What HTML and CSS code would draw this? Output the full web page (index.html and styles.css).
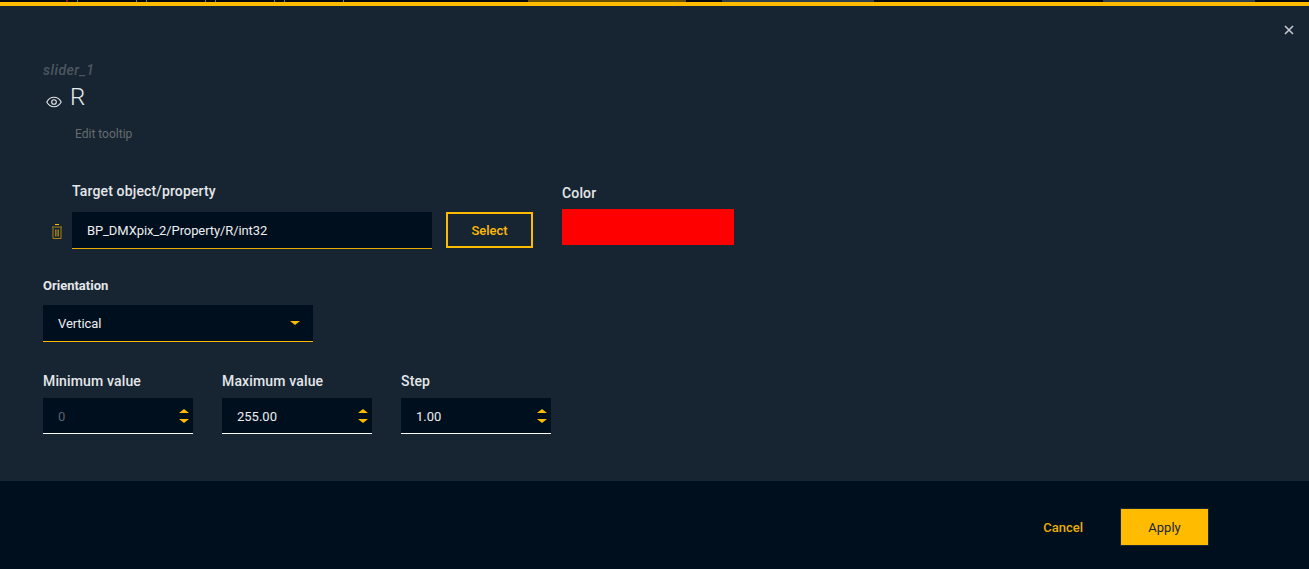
FILE: index.html
```html
<!DOCTYPE html>
<html lang="en">
<head>
    <meta charset="UTF-8">
    <title>Slider properties</title>
    <link rel="stylesheet" href="styles.css">
</head>
<body>
    <div class="strip">
        <span class="seg seg-black seg-a"><i class="tick tick-red"></i><i class="tick"></i><i class="tick"></i><i class="tick"></i><i class="tick"></i><i class="tick"></i><i class="tick"></i><i class="tick"></i><i class="tick"></i></span>
        <span class="seg seg-brown"></span>
        <span class="seg seg-black seg-b"></span>
        <span class="seg seg-grey seg-c"></span>
        <span class="seg seg-black seg-d"></span>
        <span class="seg seg-grey seg-e"></span>
        <span class="seg seg-black seg-f"></span>
    </div>
    <div class="modal">
        <button class="close" type="button" aria-label="Close">
            <svg width="10" height="10" viewBox="0 0 10 10"><path d="M1 1l8 8M9 1l-8 8" stroke="#c3c9cf" stroke-width="1.6" fill="none"/></svg>
        </button>

        <div class="header">
            <div class="widget-id">slider_1</div>
            <div class="title-row">
                <svg class="eye" width="16" height="12" viewBox="0 0 16 12" fill="none" stroke="#e6e8ea" stroke-width="1.1">
                    <path d="M.8 6C2.4 3 5 1.3 8 1.3S13.600 3 15.200 6C13.600 9 11 10.700 8 10.700S2.400 9 .8 6z"/>
                    <circle cx="8" cy="6" r="2.300"/>
                </svg>
                <h1>R</h1>
            </div>
            <div class="tooltip-hint">Edit tooltip</div>
        </div>

        <div class="target-row">
            <svg class="trash" width="12" height="15" viewBox="0 0 12 15" fill="none" stroke="#a98412" stroke-width="1">
                <path d="M4 .5h4" stroke="#ffbb00"/>
                <path d="M1 3h10"/>
                <path d="M2 3.500v11h8v-11"/>
                <path d="M4.800 5.500v7M7.200 5.500v7" stroke-width="1.400"/>
            </svg>
            <div class="target-col">
                <label class="label-target">Target object/property</label>
                <div class="field field-target">BP_DMXpix_2/Property/R/int32</div>
            </div>
            <button class="btn-select" type="button">Select</button>
            <div class="color-col">
                <label class="label-color">Color</label>
                <div class="swatch"></div>
            </div>
        </div>

        <div class="orientation">
            <label class="label-bold">Orientation</label>
            <div class="field field-select">
                <span>Vertical</span>
                <i class="caret"></i>
            </div>
        </div>

        <div class="number-row">
            <div class="number-col">
                <label>Minimum value</label>
                <div class="field field-number muted"><span class="value">0</span><span class="spin"><i class="up"></i><i class="down"></i></span></div>
            </div>
            <div class="number-col">
                <label>Maximum value</label>
                <div class="field field-number"><span class="value">255.00</span><span class="spin"><i class="up"></i><i class="down"></i></span></div>
            </div>
            <div class="number-col">
                <label>Step</label>
                <div class="field field-number"><span class="value">1.00</span><span class="spin"><i class="up"></i><i class="down"></i></span></div>
            </div>
        </div>
    </div>
    <div class="footer">
        <button class="btn-cancel" type="button">Cancel</button>
        <button class="btn-apply" type="button">Apply</button>
    </div>
</body>
</html>
```

FILE: styles.css
```css
html, body {
    margin: 0;
    padding: 0;
}
body {
    font-family: 'Roboto', 'Liberation Sans', sans-serif;
    font-size: 13px;
    background: #172532;
    color: #e4e7ea;
    width: 1309px;
    height: 569px;
    overflow: hidden;
}
.strip {
    display: flex;
    height: 2px;
    background: #000;
}
.seg {
    display: flex;
    height: 2px;
}
.seg-black { background: #05090d; }
.seg-brown { background: #6b5000; width: 158px; }
.seg-grey { background: #2f3f4a; }
.seg-a { width: 528px; padding-left: 66px; box-sizing: border-box; }
.seg-b { width: 36px; }
.seg-c { width: 152px; }
.seg-d { width: 229px; }
.seg-e { width: 152px; }
.seg-f { width: 54px; }
.tick {
    width: 1px;
    height: 2px;
    background: #777;
    margin-right: 9px;
}
.tick:nth-child(even) {
    margin-right: 58px;
}
.tick-red {
    width: 2px;
    background: #8a1010;
}
.modal {
    position: relative;
    height: 479px;
    box-sizing: border-box;
    border-top: 4px solid #ffbb00;
    padding: 55px 0 0 43px;
}
.close {
    position: absolute;
    top: 19px;
    right: 15px;
    width: 10px;
    height: 10px;
    padding: 0;
    border: none;
    background: none;
    display: flex;
}
.widget-id {
    font-size: 14px;
    font-style: italic;
    font-weight: 500;
    letter-spacing: .5px;
    line-height: 18px;
    color: #4c5661;
}
.title-row {
    display: flex;
    align-items: center;
    margin-top: 4px;
    height: 30px;
}
.eye {
    margin: 7px 0 0 3px;
}
h1 {
    margin: -2px 0 0 8px;
    font-size: 24px;
    font-weight: 300;
    line-height: 30px;
    color: #e8eaec;
}
.tooltip-hint {
    margin: 13px 0 0 32px;
    font-size: 12px;
    line-height: 16px;
    color: #666b6f;
}
.target-row {
    display: flex;
    align-items: flex-start;
    margin: 40px 0 0 8px;
}
.trash {
    margin: 42px 9px 0 0;
    flex: none;
}
.target-col {
    width: 360px;
}
label {
    display: block;
    font-size: 14px;
    line-height: 18px;
    letter-spacing: .15px;
    color: #e4e7ea;
}
.label-target {
    font-weight: 500;
    margin-bottom: 12px;
}
.field {
    display: flex;
    align-items: center;
    box-sizing: border-box;
    background: #000f1e;
    color: #eceef0;
    font-size: 13px;
    letter-spacing: -.1px;
    padding-left: 15px;
}
.field-target {
    height: 37px;
    border-bottom: 1px solid #e8ab00;
}
.btn-select {
    box-sizing: border-box;
    width: 87px;
    height: 36px;
    margin: 30px 0 0 14px;
    background: none;
    border: 2px solid #ffbb00;
    color: #ffbb00;
    font-family: inherit;
    font-size: 13px;
    font-weight: 500;
    padding: 0;
}
.color-col {
    margin: 2px 0 0 29px;
}
.label-color {
    margin-bottom: 7px;
    font-size: 14px;
    font-weight: 500;
}
.swatch {
    width: 172px;
    height: 36px;
    background: #f00;
}
.orientation {
    margin-top: 28px;
}
.label-bold {
    font-size: 13px;
    font-weight: 700;
    letter-spacing: 0;
    line-height: 18px;
    margin-bottom: 10px;
}
.field-select {
    width: 270px;
    height: 37px;
    justify-content: space-between;
    border-bottom: 1px solid #ffbb00;
    padding-right: 13px;
}
.caret {
    width: 0;
    height: 0;
    border-left: 5px solid transparent;
    border-right: 5px solid transparent;
    border-top: 4px solid #ffbb00;
}
.number-row {
    display: flex;
    gap: 29px;
    margin-top: 30px;
}
.number-col label {
    margin-bottom: 8px;
    font-weight: 500;
}
.field-number {
    width: 150px;
    height: 36px;
    justify-content: space-between;
    border-bottom: 1px solid #fff;
    padding-right: 4px;
    letter-spacing: 0;
}
.value {
    padding-top: 2px;
}
.muted .value {
    color: #59626b;
}
.spin {
    display: flex;
    flex-direction: column;
    gap: 6px;
}
.spin i {
    width: 0;
    height: 0;
    border-left: 5px solid transparent;
    border-right: 5px solid transparent;
}
.spin .up { border-bottom: 4px solid #ffbb00; }
.spin .down { border-top: 4px solid #ffbb00; }
.footer {
    display: flex;
    align-items: center;
    justify-content: flex-end;
    height: 88px;
    box-sizing: border-box;
    background: #000f1e;
    padding: 4px 100px 0 0;
}
.btn-cancel {
    background: none;
    border: none;
    padding: 0;
    color: #ebae00;
    font-family: inherit;
    font-size: 13px;
    font-weight: 500;
    margin-right: 37px;
}
.btn-apply {
    width: 89px;
    height: 38px;
    background: #ffbb00;
    border: 1px solid #182633;
    color: #182633;
    font-family: inherit;
    font-size: 13px;
    padding: 0;
}
```
